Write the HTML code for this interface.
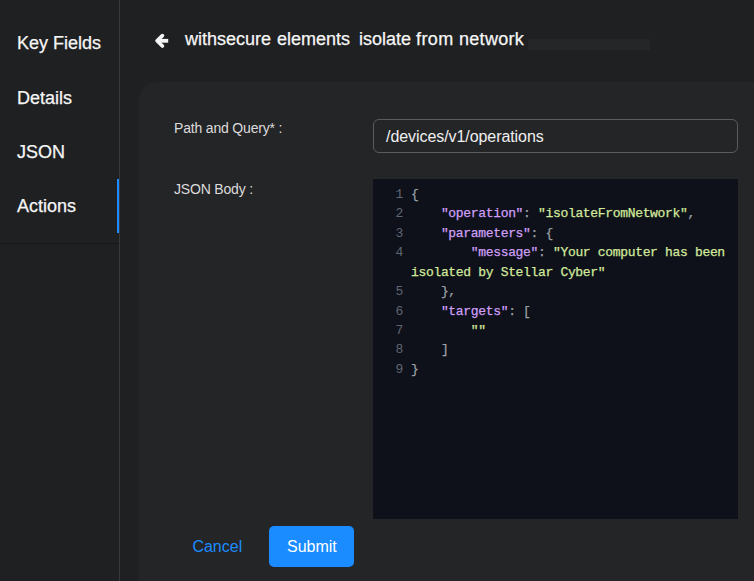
<!DOCTYPE html>
<html><head><meta charset="utf-8">
<style>
html,body{margin:0;padding:0;width:754px;height:581px;overflow:hidden;background:#1f2022;font-family:"Liberation Sans",sans-serif;}
.abs{position:absolute;}
#side{position:absolute;left:0;top:0;width:119px;height:581px;background:#1f2022;}
#sideborder{position:absolute;left:119px;top:0;width:1px;height:581px;background:#38393b;}
.nav{position:absolute;left:17px;font-size:18px;color:#f6f6f6;-webkit-text-stroke:0.25px #f6f6f6;line-height:20px;white-space:nowrap;}
#active{position:absolute;left:117px;top:179px;width:2px;height:54px;background:#1a8cff;}
#sideline{position:absolute;left:0;top:243px;width:119px;height:1px;background:#161718;}
.title{position:absolute;top:29px;font-size:18px;color:#f6f6f6;-webkit-text-stroke:0.25px #f6f6f6;line-height:20px;white-space:nowrap;}
#skel{position:absolute;left:528px;top:39px;width:122px;height:11px;background:#252628;}
#card{position:absolute;left:139px;top:82px;width:700px;height:600px;background:#242527;border-radius:18px;}
.lbl{position:absolute;left:174px;font-size:14px;letter-spacing:-0.18px;color:#dcdcdc;line-height:16px;white-space:nowrap;}
#input{position:absolute;left:373px;top:119px;width:363px;height:32px;border:1px solid #5b5c5e;border-radius:6px;}
#inputtxt{position:absolute;left:386px;top:128px;font-size:16px;letter-spacing:-0.07px;color:#f0f0f0;line-height:18px;white-space:nowrap;}
#editor{position:absolute;left:373px;top:179px;width:365px;height:340px;background:#0e111a;}
.code{position:absolute;font-family:"Liberation Mono",monospace;font-size:13px;letter-spacing:-0.33px;line-height:19.42px;-webkit-text-stroke:0.25px currentColor;white-space:pre;}
.ln{color:#5f6672;-webkit-text-stroke:0;}
.p{color:#d09ff8;}
.s{color:#d3e99c;}
.o{color:#9aa0a8;}
#cancel{position:absolute;left:192.4px;top:538px;font-size:16px;color:#1a8cff;line-height:18px;}
#submit{position:absolute;left:269px;top:526px;width:85px;height:41px;background:#1a8cff;border-radius:5px;}
#submittxt{position:absolute;left:287px;top:538px;font-size:16px;color:#fff;line-height:18px;}
</style></head><body>
<div id="side"></div>
<div id="sideborder"></div>
<div class="nav" style="top:33px">Key Fields</div>
<div class="nav" style="top:88px">Details</div>
<div class="nav" style="top:142px">JSON</div>
<div class="nav" style="top:196px">Actions</div>
<div id="active"></div>
<div id="sideline"></div>

<svg class="abs" style="left:150px;top:28px" width="26" height="26" viewBox="150 28 26 26">
<path d="M162.4 35.6 L157.1 40.8 L162.4 46.0" fill="none" stroke="#f4f4f4" stroke-width="3.7" stroke-linecap="round" stroke-linejoin="round"/>
<rect x="157" y="38.9" width="11.2" height="3.8" fill="#f4f4f4"/>
</svg>
<div class="title" style="left:185px">withsecure</div><div class="title" style="left:277px">elements</div><div class="title" style="left:359px">isolate</div><div class="title" style="left:416px;letter-spacing:0.4px">from</div><div class="title" style="left:459px;letter-spacing:0.3px">network</div>
<div id="skel"></div>

<div id="card"></div>
<div class="lbl" style="top:120px">Path and Query* :</div>
<div id="input"></div>
<div id="inputtxt">/devices/v1/operations</div>
<div class="lbl" style="top:181px">JSON Body :</div>
<div id="editor"></div>
<div class="code ln" style="left:395px;top:185px;text-align:right;width:8px">1
2
3
4

5
6
7
8
9</div>
<div class="code o" style="left:411px;top:185px">{
    <span class="p">"operation"</span>: <span class="s">"isolateFromNetwork"</span>,
    <span class="p">"parameters"</span>: {
        <span class="p">"message"</span>: <span class="s">"Your computer has been</span>
<span class="s">isolated by Stellar Cyber"</span>
    },
    <span class="p">"targets"</span>: [
        <span class="s">""</span>
    ]
}</div>

<div id="cancel">Cancel</div>
<div id="submit"></div>
<div id="submittxt">Submit</div>
</body></html>
